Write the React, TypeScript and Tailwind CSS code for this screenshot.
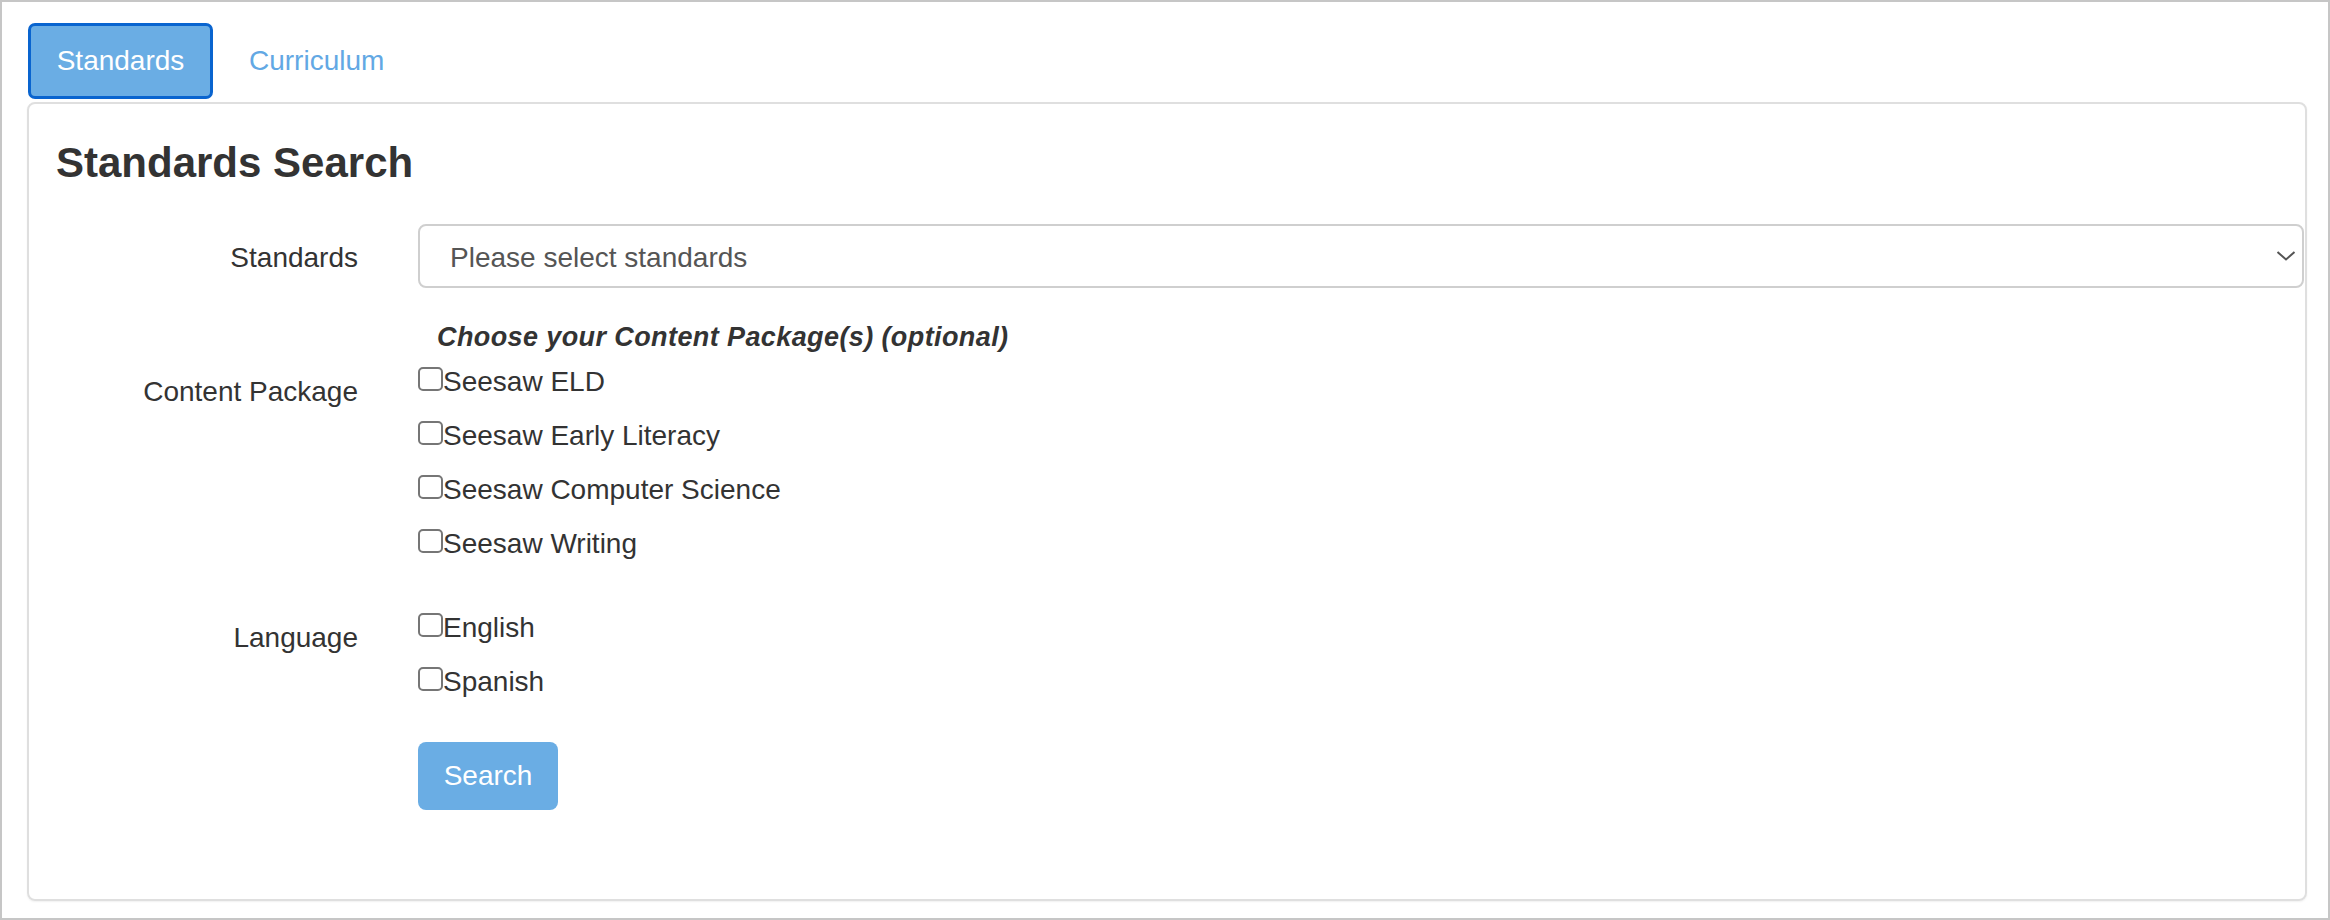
import { useState } from 'react';

const packages = ['Seesaw ELD', 'Seesaw Early Literacy', 'Seesaw Computer Science', 'Seesaw Writing'];
const languages = ['English', 'Spanish'];

function CheckRow({ label }: { label: string }) {
  return (
    <label className="flex h-[54px] items-start">
      <input
        type="checkbox"
        className="mt-[5px] h-[24px] w-[25px] shrink-0 appearance-none rounded-[5px] border-2 border-[#767676] bg-white checked:bg-[#0964cf]"
      />
      <span className="text-[28px] leading-[40px]">{label}</span>
    </label>
  );
}

export default function App() {
  const [tab, setTab] = useState<'standards' | 'curriculum'>('standards');

  return (
    <div className="h-[920px] w-full border-2 border-[#c6c6c6] bg-white pl-[25px] pt-[21px] font-['Liberation_Sans',Arial,sans-serif] text-[#333]">
      <nav className="flex h-[76px]">
        <button
          onClick={() => setTab('standards')}
          className="ml-[1px] h-[76px] w-[185px] rounded-[7px] border-[3px] border-[#0964cf] bg-[#6aade4] text-[28px] text-white"
        >
          Standards
        </button>
        <button onClick={() => setTab('curriculum')} className="px-[36px] text-[28px] text-[#62a8e4]">
          Curriculum
        </button>
      </nav>

      <section className="mt-[3px] h-[799px] w-[2280px] rounded-[8px] border-2 border-[#dfdfdf] shadow-[0_1px_2px_rgba(0,0,0,0.06)]">
        <h1 className="pl-[27px] pt-[35px] text-[42px] font-bold leading-[48px]">Standards Search</h1>

        <div className="mt-[37px] flex h-[64px] items-center">
          <label className="w-[329px] pt-[3px] text-right text-[28px]">Standards</label>
          <div className="relative ml-[60px] mr-[1px] flex-1">
            <select className="h-[64px] w-full appearance-none rounded-[8px] border-2 border-[#cfcfcf] bg-white pl-[30px] pt-[3px] text-[28px] text-[#555]">
              <option>Please select standards</option>
            </select>
            <svg
              className="pointer-events-none absolute right-[8px] top-1/2 -translate-y-1/2"
              width="20"
              height="11"
              viewBox="0 0 20 11"
              fill="none"
            >
              <path d="M1.5 1.5 L10 9 L18.5 1.5" stroke="#555" strokeWidth="2" />
            </svg>
          </div>
        </div>

        <div className="mt-[31px] flex">
          <div className="w-[329px]" />
          <p className="ml-[60px] pl-[19px] text-[27px] font-bold italic leading-[36px] tracking-[0.4px]">
            Choose your Content Package(s) (optional)
          </p>
        </div>

        <div className="mt-[7px] flex">
          <label className="w-[329px] pt-[10px] text-right text-[28px] leading-[40px]">Content Package</label>
          <div className="ml-[60px] flex flex-col">
            {packages.map((p) => (
              <CheckRow key={p} label={p} />
            ))}
          </div>
        </div>

        <div className="mt-[30px] flex">
          <label className="w-[329px] pt-[10px] text-right text-[28px] leading-[40px]">Language</label>
          <div className="ml-[60px] flex flex-col">
            {languages.map((l) => (
              <CheckRow key={l} label={l} />
            ))}
          </div>
        </div>

        <div className="mt-[26px] flex">
          <div className="w-[329px]" />
          <button className="ml-[60px] h-[68px] w-[140px] rounded-[8px] bg-[#6aade4] text-[28px] text-white">
            Search
          </button>
        </div>
      </section>
      {tab === 'curriculum' && null}
    </div>
  );
}
